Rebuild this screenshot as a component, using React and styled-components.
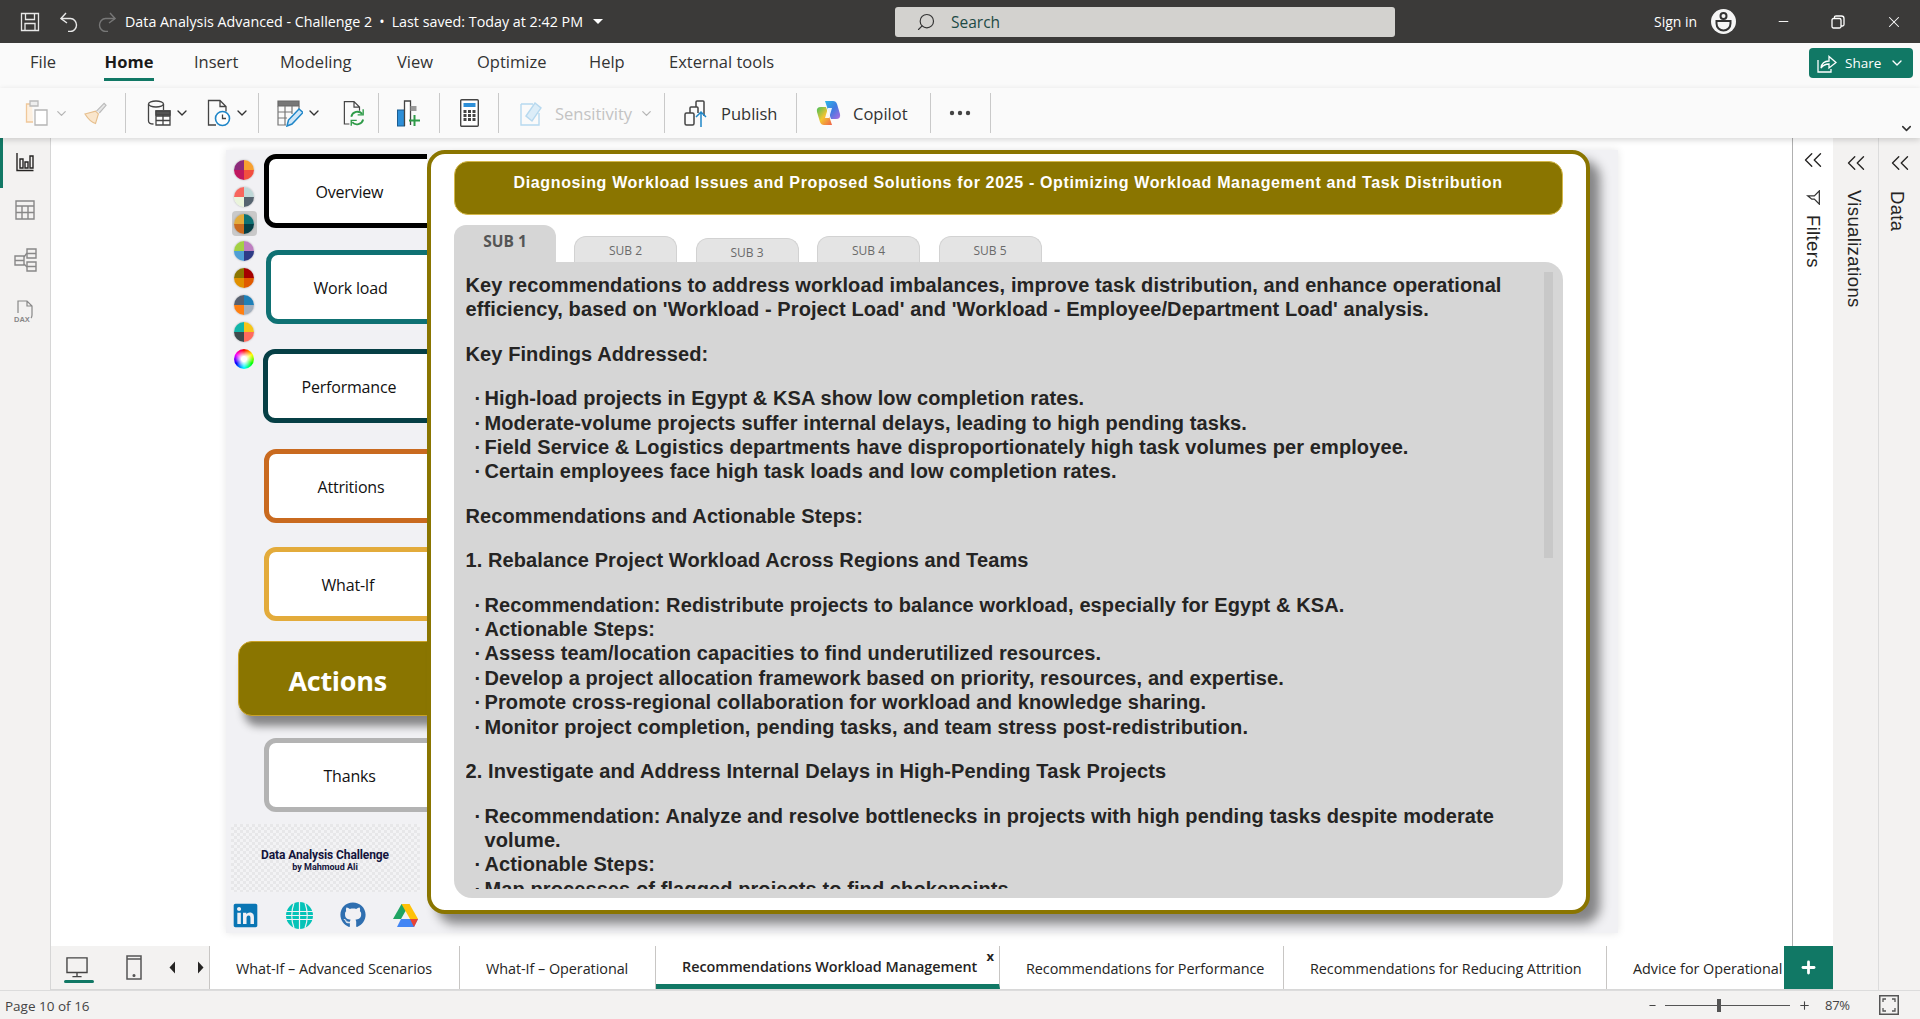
import styled, { createGlobalStyle } from "styled-components";
import { FaLinkedin, FaGithub } from "react-icons/fa";
import { ChevronDown, ChevronsLeft, Search, X, Minus, Plus } from "lucide-react";

const UI = `"Open Sans", "Noto Sans", sans-serif`;
const GREEN = "#117865";
const OLIVE = "#8a7500";

const GlobalStyle = createGlobalStyle`
  html, body { margin: 0; padding: 0; height: 100%; overflow: hidden; background: #fff; }
  #root { height: 100%; }
  * { box-sizing: border-box; }
`;

const Shell = styled.div`
  width: 1920px;
  height: 1019px;
  display: flex;
  flex-direction: column;
  overflow: hidden;
  font-family: ${UI};
  color: #252423;
`;

/* title bar */
const TitleBar = styled.div`
  height: 43px;
  flex: none;
  background: #3b3a39;
  color: #fff;
  display: flex;
  align-items: center;
  padding-left: 20px;
  font-size: 14.3px;
`;
const TitleIcons = styled.div`
  display: flex;
  align-items: center;
  gap: 20px;
  width: 105px;
  flex: none;
`;
const DocTitle = styled.div`
  width: 770px;
  flex: none;
  display: flex;
  align-items: center;
  gap: 7px;
  white-space: nowrap;
`;
const Caret = styled.span`
  width: 0;
  height: 0;
  margin-left: 3px;
  border-left: 5px solid transparent;
  border-right: 5px solid transparent;
  border-top: 5px solid #fff;
`;
const SearchBox = styled.div`
  width: 500px;
  height: 30px;
  flex: none;
  display: flex;
  align-items: center;
  gap: 15px;
  padding-left: 21px;
  background: #d3d2cf;
  border-radius: 3px;
  color: #1d4a45;
  font-size: 15.5px;
`;
const SignIn = styled.div`
  margin-left: 259px;
  width: 57px;
  flex: none;
  font-size: 14px;
  white-space: nowrap;
`;
const Avatar = styled.div`
  width: 25px;
  height: 25px;
  flex: none;
  border-radius: 50%;
  background: #f5f5f5;
  display: flex;
  align-items: center;
  justify-content: center;
`;
const WinControls = styled.div`
  display: flex;
  align-items: center;
  gap: 40px;
  margin-left: 40px;
`;

/* ribbon */
const MenuRow = styled.div`
  height: 45px;
  flex: none;
  background: #fafafa;
  display: flex;
  align-items: flex-start;
  padding-left: 30px;
`;
const MenuItem = styled.div`
  width: ${(p) => p.$w}px;
  margin-right: ${(p) => p.$gap}px;
  flex: none;
  height: 38px;
  line-height: 38px;
  font-size: 16.5px;
  text-align: ${(p) => (p.$active ? "center" : "left")};
  font-weight: ${(p) => (p.$active ? 700 : 400)};
  color: ${(p) => (p.$active ? "#1b1a19" : "#333")};
  border-bottom: 3px solid ${(p) => (p.$active ? GREEN : "transparent")};
  white-space: nowrap;
`;
const ShareButton = styled.div`
  margin-left: auto;
  margin-top: 5px;
  margin-right: 7px;
  width: 104px;
  height: 30px;
  background: ${GREEN};
  color: #fff;
  border-radius: 4px;
  display: flex;
  align-items: center;
  padding-left: 8px;
  gap: 8px;
  font-size: 13.5px;
`;
const Toolbar = styled.div`
  height: 50px;
  flex: none;
  background: #fafafa;
  box-shadow: 0 2px 6px rgba(0, 0, 0, 0.16);
  display: flex;
  align-items: flex-start;
  padding: 5px 0 0;
  position: relative;
  z-index: 2;
`;
const ToolGroup = styled.div`
  height: 40px;
  width: ${(p) => p.$w}px;
  flex: none;
  display: flex;
  align-items: center;
  padding-left: ${(p) => p.$pad}px;
  gap: ${(p) => p.$gap || 0}px;
  border-right: 1px solid #c9c9c9;
  font-size: 16.5px;
  color: ${(p) => (p.$muted ? "#c3c3c3" : "#333")};
  white-space: nowrap;
`;
const ToolSpacer = styled.span`
  width: ${(p) => p.$w}px;
  flex: none;
`;
const RibbonCollapse = styled.div`
  margin-left: auto;
  margin-right: 6px;
  margin-top: 29px;
  height: 12px;
  display: flex;
  align-items: center;
`;

/* body */
const Body = styled.div`
  flex: 1;
  min-height: 0;
  display: flex;
`;
const Rail = styled.div`
  width: 51px;
  flex: none;
  background: #f3f2f1;
  border-right: 1px solid #d6d6d6;
  display: flex;
  flex-direction: column;
  align-items: center;
  gap: 28px;
  padding-top: 14px;
  position: relative;
`;
const RailMark = styled.span`
  position: absolute;
  left: 0;
  top: 0;
  width: 3px;
  height: 50px;
  background: ${GREEN};
`;
const Center = styled.div`
  flex: 1;
  min-width: 0;
  display: flex;
  flex-direction: column;
`;
const Workspace = styled.div`
  flex: 1;
  min-height: 0;
  display: flex;
`;
const Canvas = styled.div`
  flex: 1;
  min-width: 0;
  background: #fff;
  display: flex;
  justify-content: center;
  padding-top: 12px;
`;
const FiltersPane = styled.div`
  width: 41px;
  flex: none;
  background: #fff;
  border-left: 1px solid #b0b0b0;
`;
const SidePane = styled.div`
  width: ${(p) => p.$w}px;
  flex: none;
  background: #f3f2f1;
  border-left: ${(p) => (p.$line ? "1px solid #dcdcdc" : "none")};
`;
const PaneInner = styled.div`
  display: flex;
  flex-direction: column;
  align-items: center;
  padding-top: ${(p) => p.$top}px;
`;
const PaneLabel = styled.div`
  margin-top: ${(p) => p.$top}px;
  margin-right: ${(p) => p.$nudge || 0}px;
  writing-mode: vertical-rl;
  font-family: "Liberation Sans", Arial, sans-serif;
  font-size: 18.5px;
  letter-spacing: 0.35px;
  color: #252423;
`;
const FunnelSlot = styled.div`
  margin-top: 15px;
  height: 15px;
  display: flex;
  align-items: center;
`;

/* report page */
const Page = styled.div`
  width: 1392px;
  height: 783px;
  background: #f1f1f4;
  box-shadow: 0 0 8px rgba(0, 0, 0, 0.1);
  display: flex;
`;
const LeftCol = styled.div`
  width: 201px;
  flex: none;
  overflow: hidden;
  display: flex;
  flex-direction: column;
`;
const TopNav = styled.div`
  display: flex;
  padding-left: 6px;
`;
const Swatches = styled.div`
  width: 25px;
  flex: none;
  margin-top: 7px;
  display: flex;
  flex-direction: column;
  gap: 2px;
`;
const SwatchCell = styled.div`
  width: 25px;
  height: 25px;
  border-radius: 4px;
  background: ${(p) => (p.$on ? "#c9c9c9" : "transparent")};
  display: flex;
  align-items: center;
  justify-content: center;
`;
const Swatch = styled.div`
  width: 20px;
  height: 20px;
  border-radius: 50%;
  box-shadow: 0 0 2px rgba(0, 0, 0, 0.3);
  background: ${(p) => `conic-gradient(${p.$c[0]} 0 25%, ${p.$c[1]} 0 50%, ${p.$c[2]} 0 75%, ${p.$c[3]} 0 100%)`};
`;
const Rainbow = styled.div`
  width: 20px;
  height: 20px;
  border-radius: 50%;
  background: radial-gradient(circle, #fff 0 18%, transparent 62%),
    conic-gradient(#f00, #ff0, #0f0, #0ff, #00f, #f0f, #f00);
`;
const NavStack = styled.div`
  display: flex;
  flex-direction: column;
`;
const NavButton = styled.div`
  width: 200px;
  height: 74px;
  flex: none;
  margin-top: ${(p) => p.$top}px;
  margin-left: ${(p) => p.$left}px;
  background: #fff;
  border: 5px solid ${(p) => p.$color};
  border-radius: 12px;
  display: flex;
  align-items: center;
  padding: 2px 0 0 ${(p) => p.$text}px;
  font-size: 16px;
  letter-spacing: -0.2px;
  color: #111;
  white-space: nowrap;
`;
const ActiveNav = styled.div`
  width: 220px;
  height: 75px;
  flex: none;
  margin: 20px 0 0 12px;
  background: ${OLIVE};
  border: 1px solid #c9a227;
  border-radius: 14px;
  box-shadow: 6px 10px 9px rgba(0, 0, 0, 0.45);
  color: #fff;
  font-weight: 700;
  font-size: 27px;
  letter-spacing: -0.3px;
  display: flex;
  align-items: center;
  padding: 3px 0 0 50px;
`;
const LogoBox = styled.div`
  margin: 12px 7px 0 5px;
  height: 68px;
  flex: none;
  background: repeating-conic-gradient(#e7e7e9 0 25%, #f3f3f5 0 50%) 0 0 / 6px 6px;
  display: flex;
  flex-direction: column;
  align-items: center;
  justify-content: center;
  padding-top: 3px;
  color: #14143c;
  font-family: Roboto, sans-serif;
  font-weight: 700;
`;
const LogoTitle = styled.div`
  font-size: 12px;
  letter-spacing: -0.1px;
`;
const LogoSub = styled.div`
  font-size: 9px;
`;
const Socials = styled.div`
  margin-top: 11px;
  padding: 0 6px 0 6px;
  display: flex;
  align-items: center;
  justify-content: space-between;
  width: 198px;
  height: 24px;
`;

/* main panel */
const Panel = styled.div`
  width: 1163px;
  height: 764px;
  flex: none;
  background: #fff;
  border: 4px solid ${OLIVE};
  border-radius: 18px;
  box-shadow: 10px 10px 11px rgba(0, 0, 0, 0.45);
  padding: 7px 23px 12px 23px;
  display: flex;
  flex-direction: column;
`;
const Banner = styled.div`
  height: 54px;
  flex: none;
  background: ${OLIVE};
  border: 1px solid #d4b84a;
  border-radius: 14px;
  color: #fff;
  font-family: "Liberation Sans", Arial, sans-serif;
  font-weight: 700;
  font-size: 16px;
  letter-spacing: 0.65px;
  text-align: center;
  line-height: 42px;
`;
const TabRow = styled.div`
  height: 47px;
  flex: none;
  display: flex;
  align-items: flex-end;
  gap: 18.5px;
`;
const SubTab = styled.div`
  width: ${(p) => (p.$on ? 102 : 103)}px;
  height: ${(p) => p.$h}px;
  background: ${(p) => (p.$on ? "#d6d6d6" : "#e4e4e4")};
  border: ${(p) => (p.$on ? "none" : "1px solid #d2d2d2")};
  border-bottom: none;
  border-radius: 12px 12px 0 0;
  color: ${(p) => (p.$on ? "#555" : "#6a6a6a")};
  font-size: ${(p) => (p.$on ? 15.5 : 12)}px;
  font-weight: ${(p) => (p.$on ? 700 : 400)};
  text-align: center;
  padding-left: ${(p) => (p.$on ? 1 : 0)}px;
  line-height: ${(p) => (p.$on ? 32 : 27)}px;
`;
const Sheet = styled.div`
  flex: 1;
  min-height: 0;
  background: #d6d6d6;
  border-radius: 0 18px 18px 18px;
  padding: 11px 10px 9px 12px;
  display: flex;
  gap: 8px;
`;
const SheetText = styled.div`
  flex: 1;
  min-width: 0;
  overflow: hidden;
  font-family: "Liberation Sans", Arial, sans-serif;
  font-weight: 700;
  font-size: 20px;
  letter-spacing: 0.1px;
  line-height: 24.4px;
  color: #252423;
`;
const Para = styled.p`
  margin: 0 0 20px;
`;
const List = styled.ul`
  list-style: none;
  margin: 0 0 20px;
  padding: 0 0 0 19px;
`;
const Item = styled.li`
  position: relative;
  &::before {
    content: "·";
    position: absolute;
    left: -10px;
  }
`;
const Scrollbar = styled.div`
  width: 9px;
  height: 286px;
  flex: none;
  margin-top: -1px;
  background: #c8c8c8;
`;

/* page tabs */
const PageTabs = styled.div`
  height: 44px;
  flex: none;
  display: flex;
  background: #fff;
  border-bottom: 1px solid #d8d8d8;
`;
const TabTools = styled.div`
  width: 159px;
  flex: none;
  border-right: 1px solid #c8c6c4;
  background: #f3f2f1;
  display: flex;
  align-items: center;
  padding-left: 15px;
  position: relative;
`;
const ToolMark = styled.span`
  position: absolute;
  left: 13px;
  bottom: 6px;
  width: 30px;
  height: 3px;
  border-radius: 2px;
  background: ${GREEN};
`;
const PageTab = styled.div`
  position: relative;
  width: ${(p) => p.$w}px;
  flex: none;
  padding: ${(p) => (p.$on ? "3px 0 0 26px" : "1px 0 0 26px")};
  display: flex;
  align-items: center;
  overflow: hidden;
  white-space: nowrap;
  font-size: 14.4px;
  letter-spacing: -0.05px;
  font-weight: ${(p) => (p.$on ? 600 : 400)};
  color: #252423;
  border-right: ${(p) => (p.$last ? "none" : "1px solid #c8c6c4")};
  border-bottom: ${(p) => (p.$on ? `5px solid ${GREEN}` : "none")};
`;
const TabClose = styled.span`
  position: absolute;
  right: 5px;
  top: 2px;
  font-size: 13px;
  font-weight: 700;
  line-height: 16px;
`;
const AddPage = styled.div`
  width: 49px;
  flex: none;
  background: ${GREEN};
  color: #fff;
  display: flex;
  align-items: center;
  justify-content: center;
`;

/* status bar */
const StatusBar = styled.div`
  height: 29px;
  flex: none;
  background: #f3f2f1;
  border-top: 1px solid #dcdcdc;
  display: flex;
  align-items: center;
  padding: 2px 21px 0 5px;
  font-size: 13.5px;
  color: #444;
`;
const ZoomBox = styled.div`
  margin-left: auto;
  margin-top: -2px;
  display: flex;
  align-items: center;
  gap: 8px;
`;
const ZoomTrack = styled.div`
  width: 125px;
  height: 1px;
  background: #555;
  position: relative;
`;
const ZoomThumb = styled.span`
  position: absolute;
  left: 52px;
  top: -6px;
  width: 4px;
  height: 13px;
  background: #555;
`;
const ZoomValue = styled.span`
  width: 52px;
  padding-left: 6px;
  font-size: 13px;
  letter-spacing: -0.3px;
`;

const SaveIcon = () => (
  <svg width="20" height="20" viewBox="0 0 20 20" fill="none" stroke="#e8e8e8" strokeWidth="1.3">
    <path d="M1.5 1.5h17v17h-17z" />
    <path d="M5.5 1.5v6h9v-6M5 18.5v-7h10v7" />
  </svg>
);
const HistoryArrow = ({ color, flip }) => (
  <svg width="18" height="20" viewBox="0 0 18 20" fill="none" stroke={color} strokeWidth="1.4" style={flip ? { transform: "scaleX(-1)" } : undefined}>
    <path d="M6 1L1 6.500l6 4.500" />
    <path d="M1 6.500h9.500a6 6.500 0 0 1 0 13H8" />
  </svg>
);
const RestoreIcon = () => (
  <svg width="14" height="14" viewBox="0 0 14 14" fill="none" stroke="#fff" strokeWidth="1.3">
    <rect x="1" y="3.5" width="9" height="9.5" rx="1.5" />
    <path d="M3.5 3.5V2.2Q3.5 1 5 1h5.5Q13 1 13 3.5v6q0 1.5-1.5 1.5H10" />
  </svg>
);
const AvatarIcon = () => (
  <svg width="21" height="21" viewBox="0 0 21 21" fill="none" stroke="#333" strokeWidth="2">
    <circle cx="10.5" cy="5" r="3" />
    <path d="M3.5 10h14v2.5a7 7 0 0 1-14 0z" />
  </svg>
);
const ShareIcon = () => (
  <svg width="20" height="20" viewBox="0 0 20 20" fill="none" stroke="#fff" strokeWidth="1.3">
    <path d="M1 7v12h13v-3" />
    <path d="M4 15q1-7 8-7V3.5l7 6-7 5.5v-4q-5 0-8 4z" />
  </svg>
);
const ClipboardIcon = () => (
  <svg width="24" height="28" viewBox="0 0 24 28" fill="none" strokeWidth="1.3">
    <path d="M7 5H1.5v18H8" stroke="#f0c89a" fill="#fdf0e0" />
    <path d="M5 2h8v5H5z" stroke="#bbb" fill="#eee" />
    <path d="M10 11h12v15H10z" stroke="#b5b5b5" fill="#fff" />
  </svg>
);
const BrushIcon = () => (
  <svg width="23" height="24" viewBox="0 0 24 24" strokeWidth="1.2">
    <path d="M1 13l11-3 3 3-3 10Q6 21 1 13z" fill="#fae6cc" stroke="#e6bf8e" />
    <path d="M13 10l8-8 2 2-7 8" fill="#e6e6e6" stroke="#bbb" />
  </svg>
);
const DataIcon = () => (
  <svg width="24" height="28" viewBox="0 0 24 28" fill="none" stroke="#444" strokeWidth="1.3">
    <ellipse cx="9" cy="5" rx="7.5" ry="3" />
    <path d="M1.5 5v17q0 3 5 3M16.5 5v6" />
    <path d="M9 12h14v14H9zM9 17h14M9 21.5h14M16 12v14" fill="#fff" />
    <path d="M9 12h14v4H9z" fill="#555" />
  </svg>
);
const ClockDocIcon = () => (
  <svg width="24" height="28" viewBox="0 0 24 28" fill="none" strokeWidth="1.3">
    <path d="M9 26H1.5V1.5H13l6 6v5M13 1.5v6h6" stroke="#444" />
    <circle cx="15.5" cy="19.5" r="7" stroke="#1f86c8" strokeWidth="1.6" fill="#fff" />
    <path d="M15.5 15.5v4h3.5" stroke="#444" />
  </svg>
);
const TableEditIcon = () => (
  <svg width="26" height="28" viewBox="0 0 26 28" fill="none" strokeWidth="1.2">
    <path d="M1 2h21v5H1z" fill="#777" stroke="#666" />
    <path d="M1 7v19h8M22 7v5M1 13h14M1 19h9M8 7v19M15 7v8" stroke="#777" />
    <path d="M10 27l1.5-6L22 10l4 3.5L15 25z" fill="#cfe6f7" stroke="#1f86c8" strokeWidth="1.5" />
  </svg>
);
const RefreshDocIcon = () => (
  <svg width="22" height="28" viewBox="0 0 24 28" fill="none" strokeWidth="1.3">
    <path d="M7 26H1.5V1.5H12l6 6v4M12 1.5v6h6" stroke="#444" />
    <path d="M9 18a7 7 0 0 1 12-3M22 21a7 7 0 0 1-12 3" stroke="#2e9b48" strokeWidth="2" />
    <path d="M22 10v6h-6M9 28v-6h6" stroke="#2e9b48" strokeWidth="1.5" />
  </svg>
);
const NewMeasureIcon = () => (
  <svg width="24" height="28" viewBox="0 0 24 28">
    <rect x="0.5" y="11" width="7" height="16" fill="#2d8fd8" stroke="#1b5c90" />
    <path d="M7.5 27V2h6v24" fill="#fff" stroke="#444" strokeWidth="1.3" />
    <rect x="13.5" y="7" width="6" height="5" fill="#999" />
    <path d="M17.5 16v11M12 21.5h11" stroke="#2e9b48" strokeWidth="2" />
  </svg>
);
const CalcIcon = () => (
  <svg width="19" height="28" viewBox="0 0 19 28">
    <rect x="0.7" y="0.7" width="17.6" height="26.6" rx="1" fill="#fff" stroke="#444" strokeWidth="1.4" />
    <rect x="3.5" y="4" width="12" height="4" fill="#2d8fd8" />
    {[11, 15, 19].flatMap((y) =>
      [3.5, 8, 12.5].map((x) => <rect key={`${x}${y}`} x={x} y={y} width="3" height="3" fill="#444" />)
    )}
  </svg>
);
const SensitivityIcon = () => (
  <svg width="22" height="28" viewBox="0 0 22 28" fill="none" stroke="#b7d9ef" strokeWidth="1.4">
    <path d="M1 5h12M1 5v21h18V14" />
    <path d="M6 17l9-13 6 5-9 13z" fill="#dcedf8" />
  </svg>
);
const PublishIcon = () => (
  <svg width="24" height="28" viewBox="0 0 24 28" fill="none" stroke="#444" strokeWidth="1.5">
    <rect x="1" y="14" width="9" height="12" rx="1.5" />
    <path d="M6 14v-5q0-1 1-1h6q1 0 1 1v5M12 8V3q0-1 1-1h6q1 0 1 1v14" />
    <path d="M17 28V13M12 18l5-5 5 5" stroke="#1f86c8" />
  </svg>
);
const CopilotIcon = () => (
  <svg width="25" height="26" viewBox="0 0 25 26">
    <defs>
      <linearGradient id="cpA" x1="0" y1="0" x2="1" y2="1">
        <stop offset="0" stopColor="#2bb8e8" />
        <stop offset="0.5" stopColor="#3f7be0" />
        <stop offset="1" stopColor="#b06be0" />
      </linearGradient>
      <linearGradient id="cpB" x1="0" y1="0" x2="1" y2="1">
        <stop offset="0" stopColor="#45c05a" />
        <stop offset="0.5" stopColor="#f4c430" />
        <stop offset="1" stopColor="#f0604a" />
      </linearGradient>
    </defs>
    <path d="M9 1h8q3 0 4 3l3 10q1 5-4 5h-5z" fill="url(#cpA)" />
    <path d="M16 25H8q-3 0-4-3L1 12q-1-5 4-5h5z" fill="url(#cpB)" />
    <path d="M12 8h4l-3 10H9z" fill="#fff" opacity="0.9" />
  </svg>
);
const DotsIcon = () => (
  <svg width="22" height="6" viewBox="0 0 22 6" fill="#444">
    <circle cx="3" cy="3" r="2.2" />
    <circle cx="11" cy="3" r="2.2" />
    <circle cx="19" cy="3" r="2.2" />
  </svg>
);
const ReportIcon = () => (
  <svg width="18" height="20" viewBox="0 0 18 20" fill="none" stroke="#252423" strokeWidth="1.4">
    <path d="M1 1v17.5h16.5" />
    <path d="M4 7h3v9H4zM9 10h3v6H9zM14 4h3v12h-3z" />
  </svg>
);
const TableIcon = () => (
  <svg width="20" height="20" viewBox="0 0 20 20" fill="none" stroke="#888" strokeWidth="1.4">
    <path d="M1 1h18v18H1zM1 6h18M1 12.5h18M7 6v13M13 6v13" />
  </svg>
);
const ModelIcon = () => (
  <svg width="23" height="24" viewBox="0 0 23 24" fill="none" stroke="#888" strokeWidth="1.4">
    <path d="M1 8h9v9H1zM1 12.5h9M13 1h9v9h-9zM13 5.500h9M13 14h9v9h-9zM13 18.500h9" />
    <path d="M10 9l3-4M10 16l3 3" />
  </svg>
);
const DaxIcon = () => (
  <svg width="22" height="24" viewBox="0 0 22 24" fill="none" stroke="#888" strokeWidth="1.2">
    <path d="M4 13V1h9l5 5v9q0 2-1 3M13 1v5h5" />
    <text x="0" y="22" fontSize="7.500" fontWeight="700" fill="#888" stroke="none" fontFamily="Liberation Sans">DAX</text>
  </svg>
);
const DesktopIcon = () => (
  <svg width="22" height="21" viewBox="0 0 24 23" fill="none" stroke="#444" strokeWidth="1.5">
    <path d="M1 1h22v16H1zM12 17v4M7 21.500h10" />
  </svg>
);
const PhoneIcon = () => (
  <svg width="16" height="25" viewBox="0 0 16 25" fill="none" stroke="#555" strokeWidth="1.5">
    <path d="M1 1h14v23H1zM1 4h14" />
    <circle cx="8" cy="20.500" r="0.8" fill="#555" />
  </svg>
);
const Arrow = ({ flip }) => (
  <svg width="7" height="13" viewBox="0 0 7 13" fill="#252423" style={flip ? { transform: "scaleX(-1)" } : undefined}>
    <path d="M6 0.500v12L0.500 6.500z" />
  </svg>
);
const Funnel = () => (
  <svg width="15" height="15" viewBox="0 0 18 16" fill="none" stroke="#333" strokeWidth="1.5">
    <path d="M1 1l16 0-6 6v3l-4 5V7z" transform="rotate(90 9 8)" />
  </svg>
);
const GlobeIcon = () => (
  <svg width="27" height="27" viewBox="0 0 27 27">
    <circle cx="13.500" cy="13.500" r="13.500" fill="#05c3b8" />
    <path d="M0 9.500h27M0 13.500h27M0 17.500h27M13.500 0v27M8 1Q3.500 13.500 8 26M19 1Q23.500 13.500 19 26" stroke="#f1f1f4" strokeWidth="1.2" fill="none" />
  </svg>
);
const DriveIcon = () => (
  <svg width="25" height="23" viewBox="0 0 25 23">
    <path d="M8.500 0h8L8 15H0z" fill="#1fa463" />
    <path d="M16.500 0L25 15h-8L8.500 0z" fill="#ffc107" />
    <path d="M25 15l-4 8H4l4-8z" fill="#4285f4" />
    <path d="M25 15l-4 8-4-8z" fill="#ea4335" />
  </svg>
);
const FitIcon = () => (
  <svg width="20" height="20" viewBox="0 0 20 20" fill="none" stroke="#555" strokeWidth="1.3">
    <path d="M0.700 0.700h18.600v18.600H0.700z" strokeWidth="1.600" />
    <path d="M4 7V4h3M13 4h3v3M16 13v3h-3M7 16H4v-3" />
  </svg>
);

const swatches = [
  ["#f7a030", "#f24f3f", "#c0185f", "#8c2a7a"],
  ["#bfd8d8", "#566470", "#eaf4dc", "#f7665e"],
  ["#0f7173", "#063f45", "#c96a1f", "#e3ab3b"],
  ["#bd7fc0", "#2e3b86", "#4f9fd5", "#a3d044"],
  ["#a50000", "#e05a00", "#e09000", "#8a7500"],
  ["#1e80b8", "#a4b0be", "#ff7f11", "#57606f"],
  ["#f5c518", "#ff6b5e", "#3d4a4d", "#12b5a8"],
];
const menu = [
  ["File", 24, 50],
  ["Home", 50, 40, true],
  ["Insert", 43, 43],
  ["Modeling", 74, 43],
  ["View", 37, 43],
  ["Optimize", 71, 41],
  ["Help", 35, 45],
  ["External tools", 105, 0],
];
const subTabs = [
  ["SUB 2", 26],
  ["SUB 3", 24],
  ["SUB 4", 26],
  ["SUB 5", 26],
];

export default function App() {
  return (
    <Shell>
      <GlobalStyle />
      <TitleBar>
        <TitleIcons>
          <SaveIcon />
          <HistoryArrow color="#e8e8e8" />
          <HistoryArrow color="#777" flip />
        </TitleIcons>
        <DocTitle>
          <span>Data Analysis Advanced - Challenge 2</span>
          <span>•</span>
          <span>Last saved: Today at 2:42 PM</span>
          <Caret />
        </DocTitle>
        <SearchBox>
          <Search size={20} strokeWidth={1.4} color="#333" style={{ transform: "scaleX(-1)" }} />
          Search
        </SearchBox>
        <SignIn>Sign in</SignIn>
        <Avatar>
          <AvatarIcon />
        </Avatar>
        <WinControls>
          <Minus size={15} strokeWidth={1.5} color="#fff" />
          <RestoreIcon />
          <X size={18} strokeWidth={1.4} color="#fff" />
        </WinControls>
      </TitleBar>

      <MenuRow>
        {menu.map(([label, w, gap, active]) => (
          <MenuItem key={label} $w={w} $gap={gap} $active={active}>
            {label}
          </MenuItem>
        ))}
        <ShareButton>
          <ShareIcon />
          Share
          <ChevronDown size={16} strokeWidth={2} />
        </ShareButton>
      </MenuRow>

      <Toolbar>
        <ToolGroup $w={126} $pad={25} $gap={5}>
          <ClipboardIcon />
          <ChevronDown size={15} color="#b5b5b5" />
          <ToolSpacer $w={5} />
          <BrushIcon />
        </ToolGroup>
        <ToolGroup $w={133} $pad={21} $gap={3}>
          <DataIcon />
          <ChevronDown size={16} color="#333" />
          <ToolSpacer $w={11} />
          <ClockDocIcon />
          <ChevronDown size={16} color="#333" />
        </ToolGroup>
        <ToolGroup $w={120} $pad={18} $gap={3}>
          <TableEditIcon />
          <ChevronDown size={16} color="#333" />
          <ToolSpacer $w={15} />
          <RefreshDocIcon />
        </ToolGroup>
        <ToolGroup $w={61} $pad={18}>
          <NewMeasureIcon />
        </ToolGroup>
        <ToolGroup $w={59} $pad={20}>
          <CalcIcon />
        </ToolGroup>
        <ToolGroup $w={166} $pad={21} $gap={13} $muted>
          <SensitivityIcon />
          Sensitivity
          <ChevronDown size={15} color="#b5b5b5" style={{ marginLeft: -6 }} />
        </ToolGroup>
        <ToolGroup $w={132} $pad={19} $gap={13}>
          <PublishIcon />
          Publish
        </ToolGroup>
        <ToolGroup $w={134} $pad={19} $gap={12}>
          <CopilotIcon />
          Copilot
        </ToolGroup>
        <ToolGroup $w={60} $pad={18}>
          <DotsIcon />
        </ToolGroup>
        <RibbonCollapse>
          <ChevronDown size={15} strokeWidth={2.5} color="#333" />
        </RibbonCollapse>
      </Toolbar>

      <Body>
        <Rail>
          <RailMark />
          <ReportIcon />
          <TableIcon />
          <ModelIcon />
          <DaxIcon />
        </Rail>
        <Center>
          <Workspace>
            <Canvas>
              <Page>
                <LeftCol>
                  <TopNav>
                    <Swatches>
                      {swatches.map((c, i) => (
                        <SwatchCell key={c[0]} $on={i === 2}>
                          <Swatch $c={c} />
                        </SwatchCell>
                      ))}
                      <SwatchCell>
                        <Rainbow />
                      </SwatchCell>
                    </Swatches>
                    <NavStack>
                      <NavButton $top={4} $left={7} $color="#000" $text={47}>Overview</NavButton>
                      <NavButton $top={22} $left={9} $color="#0f7173" $text={43}>Work load</NavButton>
                      <NavButton $top={25} $left={6} $color="#063f45" $text={34}>Performance</NavButton>
                    </NavStack>
                  </TopNav>
                  <NavButton $top={26} $left={38} $color="#c96a1f" $text={49}>Attritions</NavButton>
                  <NavButton $top={24} $left={38} $color="#e3ab3b" $text={53}>What-If</NavButton>
                  <ActiveNav>Actions</ActiveNav>
                  <NavButton $top={22} $left={38} $color="#b3b3b3" $text={55}>Thanks</NavButton>
                  <LogoBox>
                    <LogoTitle>Data Analysis Challenge</LogoTitle>
                    <LogoSub>by Mahmoud Ali</LogoSub>
                  </LogoBox>
                  <Socials>
                    <FaLinkedin size={27} color="#0a76b4" />
                    <GlobeIcon />
                    <FaGithub size={26} color="#2f6fb0" />
                    <DriveIcon />
                  </Socials>
                </LeftCol>

                <Panel>
                  <Banner>
                    Diagnosing Workload Issues and Proposed Solutions for 2025 - Optimizing Workload Management and Task Distribution
                  </Banner>
                  <TabRow>
                    <SubTab $on $h={37}>SUB 1</SubTab>
                    {subTabs.map(([label, h]) => (
                      <SubTab key={label} $h={h}>{label}</SubTab>
                    ))}
                  </TabRow>
                  <Sheet>
                    <SheetText>
                      <Para>
                        Key recommendations to address workload imbalances, improve task distribution, and enhance
                        operational efficiency, based on 'Workload - Project Load' and 'Workload - Employee/Department
                        Load' analysis.
                      </Para>
                      <Para>Key Findings Addressed:</Para>
                      <List>
                        <Item>High-load projects in Egypt &amp; KSA show low completion rates.</Item>
                        <Item>Moderate-volume projects suffer internal delays, leading to high pending tasks.</Item>
                        <Item>Field Service &amp; Logistics departments have disproportionately high task volumes per employee.</Item>
                        <Item>Certain employees face high task loads and low completion rates.</Item>
                      </List>
                      <Para>Recommendations and Actionable Steps:</Para>
                      <Para>1. Rebalance Project Workload Across Regions and Teams</Para>
                      <List>
                        <Item>Recommendation: Redistribute projects to balance workload, especially for Egypt &amp; KSA.</Item>
                        <Item>Actionable Steps:</Item>
                        <Item>Assess team/location capacities to find underutilized resources.</Item>
                        <Item>Develop a project allocation framework based on priority, resources, and expertise.</Item>
                        <Item>Promote cross-regional collaboration for workload and knowledge sharing.</Item>
                        <Item>Monitor project completion, pending tasks, and team stress post-redistribution.</Item>
                      </List>
                      <Para>2. Investigate and Address Internal Delays in High-Pending Task Projects</Para>
                      <List>
                        <Item>Recommendation: Analyze and resolve bottlenecks in projects with high pending tasks despite moderate volume.</Item>
                        <Item>Actionable Steps:</Item>
                        <Item>Map processes of flagged projects to find chokepoints.</Item>
                      </List>
                    </SheetText>
                    <Scrollbar />
                  </Sheet>
                </Panel>
              </Page>
            </Canvas>
            <FiltersPane>
              <PaneInner $top={7}>
                <ChevronsLeft size={30} strokeWidth={1.1} />
                <FunnelSlot>
                  <Funnel />
                </FunnelSlot>
                <PaneLabel $top={10}>Filters</PaneLabel>
              </PaneInner>
            </FiltersPane>
          </Workspace>
          <PageTabs>
            <TabTools>
              <DesktopIcon />
              <ToolSpacer $w={38} />
              <PhoneIcon />
              <ToolSpacer $w={27} />
              <Arrow />
              <ToolSpacer $w={21} />
              <Arrow flip />
              <ToolMark />
            </TabTools>
            <PageTab $w={250}>What-If – Advanced Scenarios</PageTab>
            <PageTab $w={196}>What-If – Operational</PageTab>
            <PageTab $w={344} $on>
              Recommendations Workload Management
              <TabClose>x</TabClose>
            </PageTab>
            <PageTab $w={284}>Recommendations for Performance</PageTab>
            <PageTab $w={323}>Recommendations for Reducing Attrition</PageTab>
            <PageTab $w={177} $last>Advice for Operational</PageTab>
            <AddPage>
              <Plus size={19} strokeWidth={3.5} />
            </AddPage>
          </PageTabs>
        </Center>
        <SidePane $w={45}>
          <PaneInner $top={10}>
            <ChevronsLeft size={30} strokeWidth={1.1} />
            <PaneLabel $top={12} $nudge={4}>Visualizations</PaneLabel>
          </PaneInner>
        </SidePane>
        <SidePane $w={42} $line>
          <PaneInner $top={10}>
            <ChevronsLeft size={30} strokeWidth={1.1} />
            <PaneLabel $top={13} $nudge={6}>Data</PaneLabel>
          </PaneInner>
        </SidePane>
      </Body>

      <StatusBar>
        Page 10 of 16
        <ZoomBox>
          <Minus size={9} strokeWidth={3} />
          <ZoomTrack>
            <ZoomThumb />
          </ZoomTrack>
          <Plus size={13} strokeWidth={2} />
          <ZoomValue>87%</ZoomValue>
          <FitIcon />
        </ZoomBox>
      </StatusBar>
    </Shell>
  );
}
